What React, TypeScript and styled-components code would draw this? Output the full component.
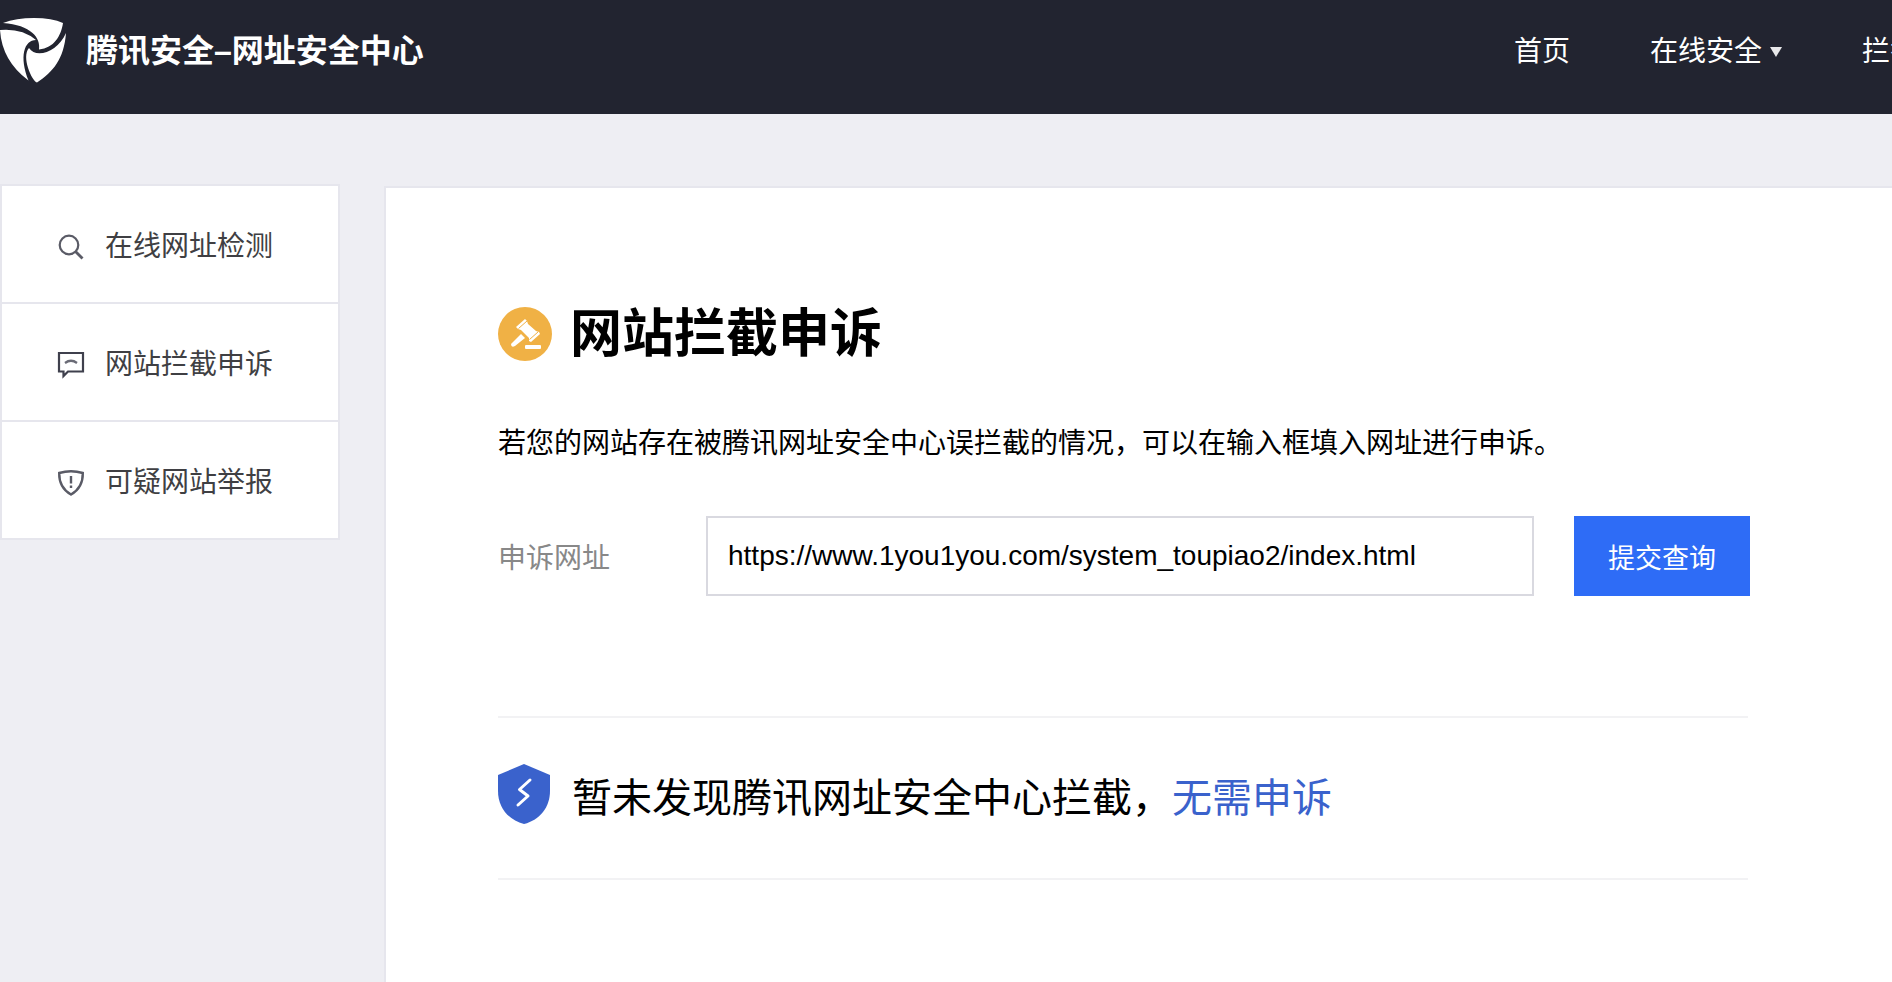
import React, { useState } from 'react';
import styled, { createGlobalStyle } from 'styled-components';

const GlobalStyle = createGlobalStyle`
  *, *::before, *::after { box-sizing: border-box; }
  body {
    margin: 0;
    background: #eeeef3;
    color: #000;
    font-family: "Liberation Sans", "Noto Sans CJK SC", sans-serif;
    font-size: 28px;
    overflow-x: hidden;
  }
  h1, p, ul { margin: 0; padding: 0; }
  ul { list-style: none; }
  a { color: inherit; text-decoration: none; }
  svg { display: block; flex: none; }
`;

const Header = styled.header`
  display: grid;
  grid-template-columns: 1fr 378px;
  height: 114px;
  padding-bottom: 12px;
  background: #222430;
  color: #fff;
  overflow: hidden;
`;

const Brand = styled.a`
  display: flex;
  align-items: center;
  gap: 20px;
  font-size: 32px;
  font-weight: 700;
  line-height: 48px;
  white-space: nowrap;
`;

const Nav = styled.nav`
  display: flex;
  align-items: center;
  gap: 80px;
  padding-top: 2px;
  line-height: 40px;
  white-space: nowrap;
`;

const NavLink = styled.a`
  display: flex;
  flex: none;
  align-items: center;
  gap: 8px;
`;

const Body = styled.div`
  display: flex;
  align-items: flex-start;
  gap: 44px;
  padding-top: 70px;
`;

const SideMenu = styled.ul`
  flex: none;
  width: 340px;
  background: #fff;
  border: 2px solid #e6e6ed;
`;

const SideItem = styled.li`
  & + & { border-top: 2px solid #e6e6ed; }
`;

const SideLink = styled.a`
  display: flex;
  align-items: center;
  gap: 20px;
  height: 116px;
  padding-left: 53px;
  color: #3f3f43;
`;

const Panel = styled.main`
  flex: 1;
  min-width: 0;
  min-height: calc(100vh - 186px);
  margin-top: 2px;
  padding: 112px 142px 0 112px;
  background: #fff;
  border: solid #e6e6ed;
  border-width: 2px 0 0 2px;
`;

const Title = styled.h1`
  display: flex;
  align-items: center;
  gap: 18px;
  font-size: 52px;
  line-height: 68px;
`;

const Intro = styled.p`
  margin-top: 56px;
  line-height: 40px;
`;

const Form = styled.form`
  display: flex;
  align-items: center;
  margin-top: 52px;
`;

const Label = styled.label`
  flex: none;
  width: 208px;
  color: #888;
`;

const UrlInput = styled.input`
  flex: 1;
  min-width: 0;
  height: 80px;
  padding: 0 20px;
  border: 2px solid #d9d9e0;
  border-radius: 0;
  background: #fff;
  color: #000;
  font: inherit;
  outline: none;
`;

const Submit = styled.button`
  flex: none;
  width: 176px;
  height: 80px;
  margin-left: 40px;
  padding: 0;
  border: 0;
  background: #2e6cf6;
  color: #fff;
  font: inherit;
  font-size: 27px;
`;

const Result = styled.section`
  display: flex;
  align-items: flex-start;
  gap: 22px;
  height: 164px;
  margin: 120px 2px 0 0;
  padding-top: 46px;
  border: solid #f2f2f4;
  border-width: 2px 0;
  font-size: 40px;
  line-height: 68px;
`;

const Highlight = styled.span`
  color: #3a62cc;
`;

const Logo = () => (
  <svg width="66" height="66" viewBox="0 0 66 66" fill="#fff" aria-hidden="true">
    <path d="M3 5Q16 0 34 0Q52 0 63 5C61 18 54 30 39 31.500C41 20 31 7 3 5Z" />
    <path d="M0 12Q22 10 36 22C24 22 19 39 28.500 62.500Q2 43 0 12Z" />
    <path d="M66 15C64 41 53 54 37 64.500C32 63 21 39 29 30C36 41 58 34 66 15Z" />
  </svg>
);

const SearchIcon = () => (
  <svg width="30" height="32" viewBox="0 0 30 32" fill="none" stroke="#5a5b66" strokeWidth="2.2" aria-hidden="true">
    <circle cx="14" cy="17" r="9.3" />
    <path d="M20.500 23.500L27.500 30.500" strokeWidth="2.800" />
  </svg>
);

const MessageIcon = () => (
  <svg width="30" height="34" viewBox="0 0 30 34" fill="none" stroke="#3f404d" strokeWidth="2.200" aria-hidden="true">
    <path d="M4 8H28V26.500H13L8.500 31V26.500H4Z" />
    <path d="M10 18Q16 13.500 22 18" stroke="#6a6b76" />
  </svg>
);

const AlertIcon = () => (
  <svg width="30" height="32" viewBox="0 0 30 32" fill="none" stroke="#5a5b66" strokeWidth="2.400" aria-hidden="true">
    <path d="M4.200 9Q16 5.500 27.800 9C28 20 24 26 16 30.500C8 26 4 20 4.200 9Z" />
    <path d="M16 12V19.500M16 21.500V24" />
  </svg>
);

const GavelIcon = () => (
  <svg width="54" height="54" viewBox="0 0 54 54" fill="#fff" aria-hidden="true">
    <circle cx="27" cy="27" r="27" fill="#f0b145" />
    <path d="M18 20L27 12L29 14L30 17L38 24L41 25L42 27L33 35L31 34L31 31L23 23L20 22Z" />
    <path d="M20.500 21.500L29 14M31.500 32.500L40 25" stroke="#f0b145" strokeWidth="1" />
    <path d="M23 27L27 31L17 39Q13 41 13 37Z" />
    <rect x="27" y="38" width="16" height="4" rx="1" />
  </svg>
);

const ShieldIcon = () => (
  <svg width="52" height="60" viewBox="0 0 52 60" aria-hidden="true">
    <path d="M26 0L52 11V27C52 43 42 56 26 60C10 56 0 43 0 27V11Z" fill="#3a62cc" />
    <path d="M32 16L21.500 25.500L30 32L20 41" fill="none" stroke="#fff" strokeWidth="3" strokeLinejoin="round" strokeLinecap="round" />
  </svg>
);

const Caret = () => (
  <svg width="12" height="10" viewBox="0 0 12 10" fill="#e8e8ea" aria-hidden="true">
    <path d="M0 0H12L6 10Z" />
  </svg>
);

const sideItems = [
  { label: '在线网址检测', Icon: SearchIcon },
  { label: '网站拦截申诉', Icon: MessageIcon },
  { label: '可疑网站举报', Icon: AlertIcon },
];

export default function App() {
  const [url, setUrl] = useState('https://www.1you1you.com/system_toupiao2/index.html');

  return (
    <>
      <GlobalStyle />
      <Header>
        <Brand href="#">
          <Logo />
          腾讯安全–网址安全中心
        </Brand>
        <Nav>
          <NavLink href="#">首页</NavLink>
          <NavLink href="#">
            在线安全
            <Caret />
          </NavLink>
          <NavLink href="#">拦截申诉</NavLink>
        </Nav>
      </Header>
      <Body>
        <SideMenu>
          {sideItems.map(({ label, Icon }) => (
            <SideItem key={label}>
              <SideLink href="#">
                <Icon />
                {label}
              </SideLink>
            </SideItem>
          ))}
        </SideMenu>
        <Panel>
          <Title>
            <GavelIcon />
            网站拦截申诉
          </Title>
          <Intro>若您的网站存在被腾讯网址安全中心误拦截的情况，可以在输入框填入网址进行申诉。</Intro>
          <Form onSubmit={(event) => event.preventDefault()}>
            <Label htmlFor="appeal-url">申诉网址</Label>
            <UrlInput id="appeal-url" type="text" value={url} onChange={(event) => setUrl(event.target.value)} />
            <Submit type="submit">提交查询</Submit>
          </Form>
          <Result>
            <ShieldIcon />
            <p>
              暂未发现腾讯网址安全中心拦截，<Highlight>无需申诉</Highlight>
            </p>
          </Result>
        </Panel>
      </Body>
    </>
  );
}
